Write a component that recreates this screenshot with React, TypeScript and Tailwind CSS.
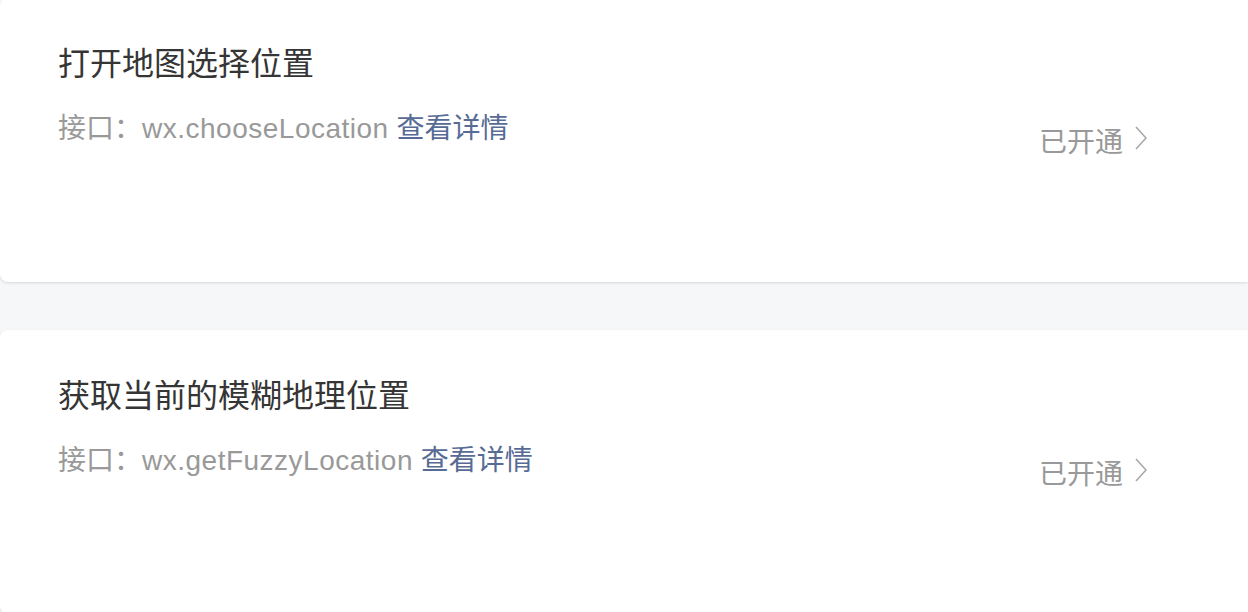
import React from "react";

const font = {
  fontFamily:
    '"Liberation Sans", "Noto Sans CJK SC", sans-serif',
};

function Card({ title, api, className }: { title: string; api: string; className?: string }) {
  return (
    <div
      className={
        "flex h-[284px] w-[1248px] items-center justify-between rounded-l-[8px] bg-white pl-[58px] pr-[101px] shadow-[0_1px_3px_rgba(0,0,0,0.12)] " +
        (className ?? "")
      }
    >
      <div className="flex h-full flex-col self-start pt-[44px]">
        <div className="text-[32px] leading-[45px] text-[#353535]">{title}</div>
        <div className="mt-[22px] text-[28px] leading-[39px] text-[#999999]">
          接口：<span className="tracking-[0.5px]">{api}</span> <span className="text-[#576b95]">查看详情</span>
        </div>
      </div>
      <div className="mt-[5px] flex items-center gap-[12px] text-[28px] leading-[39px] text-[#999999]">
        <span>已开通</span>
        <svg width="12" height="24" viewBox="0 0 12 24" className="-mt-[10px]" fill="none">
          <polyline points="1,1 11,12 1,23" stroke="#a8a8a8" strokeWidth="1.6" strokeLinejoin="miter" />
        </svg>
      </div>
    </div>
  );
}

export default function App() {
  return (
    <div className="h-[612px] w-[1248px] overflow-hidden bg-[#f6f7f9]" style={font}>
      <div className="flex flex-col gap-[48px]">
        <Card title="打开地图选择位置" api="wx.chooseLocation" className="-mt-[2px]" />
        <Card title="获取当前的模糊地理位置" api="wx.getFuzzyLocation" />
      </div>
    </div>
  );
}
